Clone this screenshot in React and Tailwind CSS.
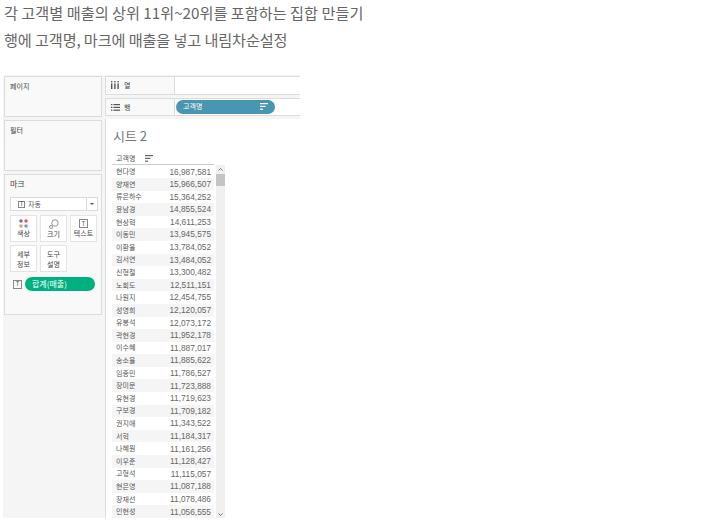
import React from "react";

const rows = [
  ["현다영", "16,987,581"],
  ["양재연", "15,966,507"],
  ["류은하수", "15,364,252"],
  ["윤남경", "14,855,524"],
  ["현상혁", "14,611,253"],
  ["이동민", "13,945,575"],
  ["이환율", "13,784,052"],
  ["김서연", "13,484,052"],
  ["신형철", "13,300,482"],
  ["노회도", "12,511,151"],
  ["나원지", "12,454,755"],
  ["성영희", "12,120,057"],
  ["유봉석", "12,073,172"],
  ["곽현경", "11,952,178"],
  ["이수혜", "11,887,017"],
  ["송소율", "11,885,622"],
  ["임종민", "11,786,527"],
  ["장미문", "11,723,888"],
  ["유현경", "11,719,623"],
  ["구보경", "11,709,182"],
  ["권지애", "11,343,522"],
  ["서혁", "11,184,317"],
  ["나혜원", "11,161,256"],
  ["이우준", "11,128,427"],
  ["고형석", "11,115,057"],
  ["현은영", "11,087,188"],
  ["장재선", "11,078,486"],
  ["인현성", "11,056,555"],
];

const SortIcon = ({ color = "#555" }) => (
  <svg width="8" height="7" viewBox="0 0 8 7" fill={color}>
    <rect x="0" y="0" width="8" height="1.2" />
    <rect x="0" y="2.8" width="5.5" height="1.2" />
    <rect x="0" y="5.6" width="3" height="1.2" />
  </svg>
);

const RowsIcon = () => (
  <svg width="9" height="7" viewBox="0 0 9 7" fill="#555">
    <rect x="0" y="0" width="1.4" height="1.2" />
    <rect x="2.4" y="0" width="6.6" height="1.2" />
    <rect x="0" y="2.8" width="1.4" height="1.2" />
    <rect x="2.4" y="2.8" width="6.6" height="1.2" />
    <rect x="0" y="5.6" width="1.4" height="1.2" />
    <rect x="2.4" y="5.6" width="6.6" height="1.2" />
  </svg>
);

const ColumnsIcon = () => (
  <svg width="8" height="8" viewBox="0 0 8 8" fill="#555">
    <rect x="0" y="0" width="1.4" height="1.4" />
    <rect x="0" y="2.4" width="1.4" height="5.6" />
    <rect x="3.2" y="0" width="1.4" height="1.4" />
    <rect x="3.2" y="2.4" width="1.4" height="5.6" />
    <rect x="6.4" y="0" width="1.4" height="1.4" />
    <rect x="6.4" y="2.4" width="1.4" height="5.6" />
  </svg>
);

const Chevron = ({ d }) => (
  <svg width="5" height="3" viewBox="0 0 5 3" fill="none" stroke="#555" strokeWidth="0.8">
    <path d={d} />
  </svg>
);

const TextIcon = ({ size = 9 }) => (
  <span
    className="flex items-center justify-center border border-[#888] text-[6px] leading-none text-[#555]"
    style={{ width: size, height: size }}
  >
    T
  </span>
);

const MarkButton = ({ children }) => (
  <div className="flex h-[27px] w-[27px] flex-col items-center justify-center border border-[#e4e4e4] bg-white text-[7px] leading-[10px] text-[#444]">
    {children}
  </div>
);

const App = () => {
  return (
    <div className="h-[525px] w-[703px] overflow-hidden bg-white font-['Noto_Sans_CJK_KR',sans-serif]">
      <p className="-mt-px pl-[4px] text-[15.2px] leading-[27px] text-[#666]">
        각 고객별 매출의 상위 11위~20위를 포함하는 집합 만들기
      </p>
      <p className="pl-[4px] text-[15.2px] leading-[27px] tracking-[-0.13px] text-[#666]">
        행에 고객명, 마크에 매출을 넣고 내림차순설정
      </p>

      <div className="ml-[3px] mt-[22px] flex h-[443px] w-[297px] gap-[3px] overflow-hidden bg-[#f5f5f5] pl-[1px] pt-[1px]">
        {/* left shelf */}
        <div className="flex w-[98px] shrink-0 flex-col gap-[3px]">
          <div className="h-[41px] border border-[#dcdcdc] bg-[#f9f9f9] px-[5px] pt-[4px] text-[7px] leading-[10px] text-[#444]">
            페이지
          </div>
          <div className="h-[51px] border border-[#dcdcdc] bg-[#f9f9f9] px-[5px] pt-[4px] text-[7px] leading-[10px] text-[#444]">
            필터
          </div>
          <div className="h-[141px] border border-[#dcdcdc] bg-[#f9f9f9] px-[5px] pt-[4px]">
            <div className="text-[8px] leading-[10px] text-[#444]">마크</div>
            <div className="mt-[8px] flex h-[14px] w-[88px] items-center border border-[#dcdcdc] bg-white pl-[7px] text-[7px] text-[#555]">
              <TextIcon size={7} />
              <span className="ml-[3px] flex-1">자동</span>
              <span className="flex h-full w-[11px] items-center justify-center border-l border-[#dcdcdc]">
                <span className="h-0 w-0 border-x-[2px] border-t-[2px] border-x-transparent border-t-[#555]" />
              </span>
            </div>
            <div className="mt-[4px] grid w-[88px] grid-cols-[27px_27px_27px] gap-[3px]">
              <MarkButton>
                <svg width="9" height="9" viewBox="0 0 9 9">
                  <circle cx="2" cy="2" r="1.8" fill="#8a6a9e" />
                  <circle cx="7" cy="2" r="1.8" fill="#d9606a" />
                  <circle cx="2" cy="7" r="1.8" fill="#e8a060" />
                  <circle cx="7" cy="7" r="1.8" fill="#6a9fd0" />
                </svg>
                <span>색상</span>
              </MarkButton>
              <MarkButton>
                <svg width="10" height="10" viewBox="0 0 10 10" fill="none" stroke="#666" strokeWidth="0.7">
                  <circle cx="6" cy="4" r="3.2" />
                  <circle cx="2" cy="8" r="1.5" />
                </svg>
                <span>크기</span>
              </MarkButton>
              <MarkButton>
                <TextIcon />
                <span>텍스트</span>
              </MarkButton>
              <MarkButton>
                <span>세부</span>
                <span>정보</span>
              </MarkButton>
              <MarkButton>
                <span>도구</span>
                <span>설명</span>
              </MarkButton>
            </div>
            <div className="mt-[5px] flex items-center gap-[3px] pl-[3px]">
              <TextIcon />
              <div className="flex h-[14px] w-[70px] items-center rounded-full bg-[#00b180] pl-[7px] text-[8px] text-white">
                합계(매출)
              </div>
            </div>
          </div>
        </div>

        {/* right side */}
        <div className="flex w-[195px] shrink-0 flex-col gap-[3px]">
          <div className="flex h-[19px] border border-r-0 border-[#dcdcdc] bg-white">
            <div className="flex w-[69px] items-center gap-[5px] border-r border-[#dcdcdc] bg-[#f9f9f9] pl-[5px] text-[7px] text-[#444]">
              <ColumnsIcon />
              <span>열</span>
            </div>
          </div>
          <div className="flex h-[19px] border border-r-0 border-[#dcdcdc] bg-white">
            <div className="flex w-[69px] items-center gap-[4px] border-r border-[#dcdcdc] bg-[#f9f9f9] pl-[5px] text-[7px] text-[#444]">
              <RowsIcon />
              <span>행</span>
            </div>
            <div className="ml-[1px] mt-[1px] flex h-[14px] w-[99px] items-center justify-between rounded-full bg-[#4996b2] px-[7px] text-[7px] text-white">
              <span>고객명</span>
              <SortIcon color="#fff" />
            </div>
          </div>
          <div className="flex-1 border-l border-[#dcdcdc] bg-white pl-[6px] pt-[8px]">
            <div className="pl-px text-[13px] leading-[18px] text-[#777]">시트 2</div>
            <div className="mt-[7px] flex h-[13px] w-[102px] items-center gap-[10px] border-b border-[#ccc] pl-[4px] text-[7px] text-[#555]">
              <span>고객명</span>
              <SortIcon color="#666" />
            </div>
            <div className="flex">
              <div className="w-[102px] shrink-0">
                {rows.map(([name, sales], i) => (
                  <div
                    key={name}
                    className={`flex h-[12.6px] items-center justify-between pl-[4px] pr-[3px] text-[7px] leading-none text-[#555] ${
                      i % 2 === 1 ? "bg-[#f5f5f5]" : "bg-white"
                    }`}
                  >
                    <span>{name}</span>
                    <span className="font-['Liberation_Sans',sans-serif] text-[8.3px] text-[#666]">{sales}</span>
                  </div>
                ))}
              </div>
              <div className="ml-[2px] flex w-[9px] shrink-0 flex-col self-stretch bg-[#f0f0f0]">
                <div className="flex h-[9px] items-center justify-center">
                  <Chevron d="M0.5 2.5 L2.5 0.5 L4.5 2.5" />
                </div>
                <div className="h-[12px] bg-[#c4c4c4]" />
                <div className="mt-auto flex h-[5px] items-start justify-center">
                  <Chevron d="M0.5 0.5 L2.5 2.5 L4.5 0.5" />
                </div>
              </div>
            </div>
          </div>
        </div>
      </div>
    </div>
  );
};

export default App;
